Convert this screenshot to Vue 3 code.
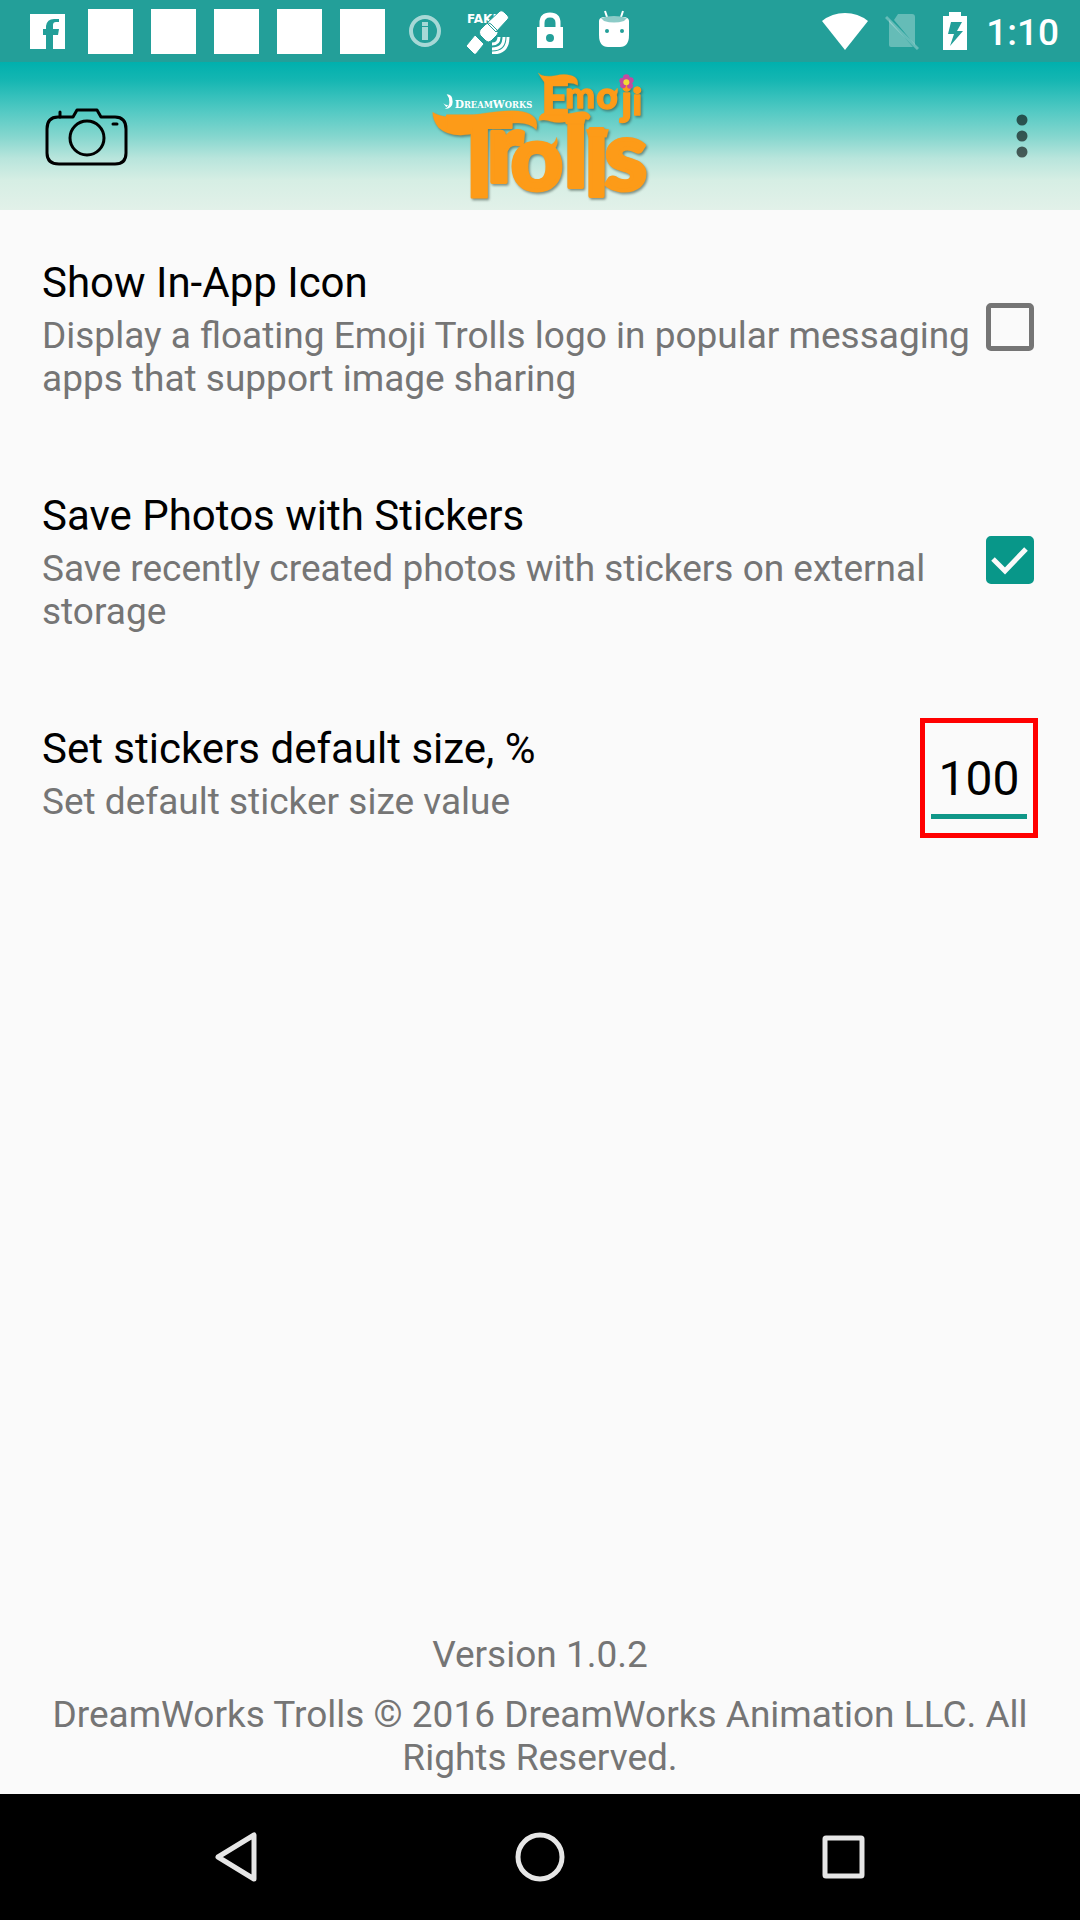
<script setup>
import { ref } from 'vue'

const showIcon = ref(false)
const savePhotos = ref(true)
const stickerSize = ref('100')
</script>

<template>
  <div class="screen">
    <div class="status">
      <div class="notifications">
        <svg class="note" viewBox="0 0 45 45" aria-hidden="true">
          <path fill="#fff" d="M5 5h35v35H28V26h5l1-6h-6v-4q0-3 3-3h3V10h-5q-7 0-8 7v3h-3v6h3v14H5z" />
        </svg>
        <span v-for="n in 5" :key="n" class="note block"></span>
        <svg class="note" viewBox="0 0 45 45" aria-hidden="true">
          <g opacity="0.6">
            <circle cx="22" cy="22" r="14" fill="none" stroke="#fff" stroke-width="4" />
            <path fill="#fff" d="M19 13h6v4h-6zM19 18h6v13h-6z" />
          </g>
        </svg>
        <svg class="note" viewBox="0 0 45 45" aria-hidden="true">
          <text x="1" y="14" class="fake">FAKE</text>
          <path fill="#fff" stroke="#239f99" d="M34 2q2-1 4 1l4 4q1 2 0 3L30 23l-9-9zM9 26l9 9-8 10q-1 1-2 0l-8-8zM20 15q3-2 5 0l6 6q2 3 0 5l-6 6q-3 2-5 0l-6-6q-1-3 0-5z" />
          <g fill="none" stroke="#fff" stroke-width="3">
            <path d="M33 28q0 7-7 7M38 28q0 12-12 12M42 28q0 16-16 16" />
          </g>
        </svg>
        <svg class="note" viewBox="0 0 45 45" aria-hidden="true">
          <path fill="none" stroke="#fff" stroke-width="5" d="M13 20v-6q0-8 8-8t8 8v6" />
          <path fill="#fff" fill-rule="evenodd" d="M8 18h26v21H8zM21 25a4 4 0 1 0 0 8 4 4 0 1 0 0-8z" />
        </svg>
        <svg class="note" viewBox="0 0 45 45" aria-hidden="true">
          <path fill="none" stroke="#fff" stroke-width="2" d="M13 2l3 9M31 2l-3 9" />
          <path fill="#fff" d="M7 12q0-3 4-4h22q4 1 4 4v14q0 12-9 12H16q-9 0-9-12z" />
          <path fill="#8ccbc7" d="M9 9q13-4 26 0l-3 3q-10 3-20 0z" />
          <circle cx="15" cy="22" r="2" fill="#239f99" />
          <circle cx="30" cy="22" r="2" fill="#239f99" />
        </svg>
      </div>
      <div class="system">
        <svg width="46" height="38" viewBox="0 0 46 38" aria-hidden="true">
          <path fill="#fff" d="M0 9Q10 1 23 1t23 8L23 38z" />
        </svg>
        <svg width="34" height="38" viewBox="0 0 34 38" aria-hidden="true">
          <path fill="#fff" opacity="0.3" d="M13 2h14q3 0 3 3v28L9 8zM4 8l24 27H6q-2 0-2-2z" />
          <path stroke="#fff" opacity="0.3" stroke-width="3" d="M1 5l32 32" />
        </svg>
        <svg class="battery" width="24" height="38" viewBox="0 0 24 38" aria-hidden="true">
          <path fill="#fff" fill-rule="evenodd" d="M6 0h12v4h6v34H0V4h6zM8 10L5 22h6L7 34l13-15h-6l5-9z" />
        </svg>
        <span class="clock">1:10</span>
      </div>
    </div>

    <header class="bar">
      <button class="icon-button" aria-label="Camera">
        <svg width="84" height="60" viewBox="0 0 84 60" aria-hidden="true">
          <g fill="none" stroke="#000" stroke-width="3" stroke-linejoin="round">
            <path d="M13 11h15l4-7h20l4 7h14q11 0 11 12v24q0 11-11 11H14Q2 58 2 47V23q0-12 11-12z" />
            <circle cx="42" cy="32" r="17" />
            <path d="M15 11V6M68 18h4" stroke-linecap="round" />
          </g>
        </svg>
      </button>
      <svg class="logo" viewBox="0 6 720 444" role="img" aria-label="DreamWorks Emoji Trolls">
        <path fill="#fff" d="M80 103q18 0 18 22 0 20-24 22 15-7 14-21 0-14-8-23zM70 130q8 7 15 4l-6 8z" />
        <text class="studio" x="104" y="143">D<tspan class="caps">REAM</tspan>W<tspan class="caps">ORKS</tspan></text>
        <g class="lettering">
          <path d="M355 39q12 14 50 8 38-9 60 5 10 8 8 24-16-10-44-6l-45 6q-14-9-29-37zM356 182q0-28 40-25 46 9 76-1 32-6 39 13 0 6-6 11-16-8-41-2-42 16-73 6-20-7-35-2z" />
          <text class="emoji"><tspan x="364" y="165" font-size="145">E</tspan><tspan x="436" y="143" font-size="106">m</tspan><tspan x="529" y="147" font-size="112">o</tspan><tspan x="604" y="166" font-size="126">j</tspan><tspan x="637" y="166" font-size="116">i</tspan></text>
          <path d="M566 98q20-2 26-14 4 18-8 26z" />
          <path d="M38 157q30 22 112 10 100-18 145-14 66 8 54 56-20-22-60-20-50 0-84 10l-55 24q-60 10-94-20-18-22-18-46zM382 258q22-4 28-26 8 26-12 38-12 10-36 10z" />
          <text class="trolls"><tspan class="stem" x="76" y="410" font-size="340">T</tspan><tspan x="200" y="366" font-size="290">r</tspan><tspan x="272" y="391" font-size="272">o</tspan><tspan x="432" y="380" font-size="276">l</tspan><tspan x="496" y="407" font-size="266">l</tspan><tspan x="553" y="390" font-size="292">s</tspan></text>
          <path d="M430 170h68l-6 22h-54zM498 208h68l-6 24h-54z" />
        </g>
        <g fill="#c24aa0">
          <circle cx="619" cy="53" r="10" /><circle cx="607" cy="62" r="9" /><circle cx="632" cy="61" r="9" />
          <circle cx="609" cy="76" r="9" /><circle cx="630" cy="77" r="9" />
        </g>
        <circle cx="619" cy="67" r="9" fill="#f2dc36" />
      </svg>
      <button class="icon-button more" aria-label="More options">
        <svg width="12" height="44" viewBox="0 0 12 44" aria-hidden="true">
          <g fill="#000" opacity="0.6">
            <circle cx="6" cy="6" r="5.5" /><circle cx="6" cy="22" r="5.5" /><circle cx="6" cy="38" r="5.5" />
          </g>
        </svg>
      </button>
    </header>

    <main class="settings">
      <div class="row">
        <div class="copy">
          <label class="title" for="show-icon">Show In-App Icon</label>
          <p id="show-icon-note">Display a floating Emoji Trolls logo in popular messaging apps that support image sharing</p>
        </div>
        <input id="show-icon" v-model="showIcon" type="checkbox" aria-describedby="show-icon-note" />
      </div>
      <div class="row">
        <div class="copy">
          <label class="title" for="save-photos">Save Photos with Stickers</label>
          <p id="save-photos-note">Save recently created photos with stickers on external storage</p>
        </div>
        <input id="save-photos" v-model="savePhotos" type="checkbox" aria-describedby="save-photos-note" />
      </div>
      <div class="row size-row">
        <div class="copy">
          <label class="title" for="sticker-size">Set stickers default size, %</label>
          <p id="sticker-size-note">Set default sticker size value</p>
        </div>
        <div class="size-box">
          <input id="sticker-size" v-model="stickerSize" type="text" inputmode="numeric" aria-describedby="sticker-size-note" />
        </div>
      </div>
    </main>

    <footer class="about">
      <p>Version 1.0.2</p>
      <p>DreamWorks Trolls © 2016 DreamWorks Animation LLC. All Rights Reserved.</p>
    </footer>

    <nav class="keys">
      <button aria-label="Back">
        <svg width="50" height="50" viewBox="0 0 50 50" aria-hidden="true">
          <path d="M43 3v44L7 25z" />
        </svg>
      </button>
      <button aria-label="Home">
        <svg width="50" height="50" viewBox="0 0 50 50" aria-hidden="true">
          <circle cx="25" cy="25" r="22" />
        </svg>
      </button>
      <button aria-label="Recent apps">
        <svg width="50" height="50" viewBox="0 0 50 50" aria-hidden="true">
          <rect x="6" y="6" width="37" height="38" rx="1" />
        </svg>
      </button>
    </nav>
  </div>
</template>

<style>
body {
  margin: 0;
}
</style>

<style scoped>
.screen {
  display: flex;
  flex-direction: column;
  min-height: 100vh;
  background: #fafafa;
  color: #000;
  font-family: Roboto, "Liberation Sans", sans-serif;
}

.screen * {
  box-sizing: border-box;
}

svg {
  display: block;
}

button {
  padding: 0;
  border: 0;
  background: none;
}

p {
  margin: 0;
}

.status {
  display: flex;
  align-items: center;
  justify-content: space-between;
  height: 62px;
  padding: 0 21px 0 25px;
  background: #239f99;
}

.notifications {
  display: flex;
  gap: 18px;
}

.note {
  width: 45px;
  height: 45px;
}

.block {
  background: #fff;
}

.fake {
  fill: #fff;
  font: 700 12px "DejaVu Sans", sans-serif;
}

.system {
  display: flex;
  align-items: center;
  gap: 17px;
}

.battery {
  margin: 0 2px 0 7px;
}

.clock {
  padding-top: 2px;
  color: #fff;
  font-size: 37px;
  font-weight: 500;
  line-height: 43px;
}

.bar {
  display: grid;
  grid-template-columns: 1fr auto 1fr;
  align-items: center;
  height: 148px;
  padding: 0 45px;
  background: linear-gradient(#00b0ad 0%, #14b6b2 12%, #55cac4 34%, #84d6ce 50%, #b8e5dc 65%, #d6eee4 80%, #e2f1e9 100%);
}

.icon-button {
  justify-self: start;
}

.more {
  justify-self: end;
  padding-right: 7px;
}

.logo {
  width: 240px;
  height: 148px;
  overflow: visible;
}

.studio {
  fill: #fff;
  font: 700 32px "DejaVu Serif", serif;
}

.caps {
  font-size: 25px;
}

.lettering {
  fill: #fd9b18;
  stroke: #fd9b18;
  stroke-linejoin: round;
  filter: drop-shadow(4px 5px 3px rgba(60, 80, 70, 0.6));
}

.emoji {
  stroke-width: 4;
  font-family: Lato, sans-serif;
  font-weight: 900;
}

.trolls {
  stroke-width: 12;
  font-family: Lato, sans-serif;
  font-weight: 900;
}

.stem {
  stroke-width: 6;
  font-weight: 700;
}

.settings {
  flex: 1;
}

.row {
  display: flex;
  align-items: center;
  justify-content: space-between;
  gap: 12px;
  min-height: 233px;
  padding: 0 42px;
}

.copy {
  flex: 1;
  align-self: flex-start;
  padding: 48px 0 43px;
}

.title {
  display: block;
  margin-bottom: 6px;
  font-size: 42px;
  line-height: 50px;
}

.copy p,
.about {
  color: #757575;
  font-size: 37px;
  line-height: 43px;
}

input[type="checkbox"] {
  appearance: none;
  flex: none;
  width: 48px;
  height: 48px;
  margin: 0 4px 0 0;
  border: 5px solid #757575;
  border-radius: 5px;
}

input[type="checkbox"]:checked {
  border-color: #089789;
  background: #089789 url("data:image/svg+xml,%3Csvg xmlns='http://www.w3.org/2000/svg' viewBox='0 0 38 38'%3E%3Cpath d='M2 18l12 12L35 8' fill='none' stroke='%23fafafa' stroke-width='5'/%3E%3C/svg%3E") center / 38px 38px no-repeat;
}

.size-row {
  align-items: flex-start;
}

.size-box {
  width: 118px;
  height: 120px;
  margin-top: 42px;
  padding: 28px 6px 14px;
  border: 5px solid #f00;
}

#sticker-size {
  width: 100%;
  height: 68px;
  padding: 0 0 8px;
  border: 0;
  border-bottom: 5px solid #109788;
  outline: 0;
  background: none;
  color: #000;
  font: 48px Roboto, "Liberation Sans", sans-serif;
  text-align: center;
}

.about {
  display: flex;
  flex-direction: column;
  gap: 17px;
  padding: 0 42px 15px;
  text-align: center;
}

.keys {
  display: flex;
  align-items: center;
  justify-content: center;
  gap: 254px;
  height: 126px;
  background: #000;
}

.keys svg {
  fill: none;
  stroke: #e6e6e6;
  stroke-width: 5;
  stroke-linejoin: round;
}
</style>
